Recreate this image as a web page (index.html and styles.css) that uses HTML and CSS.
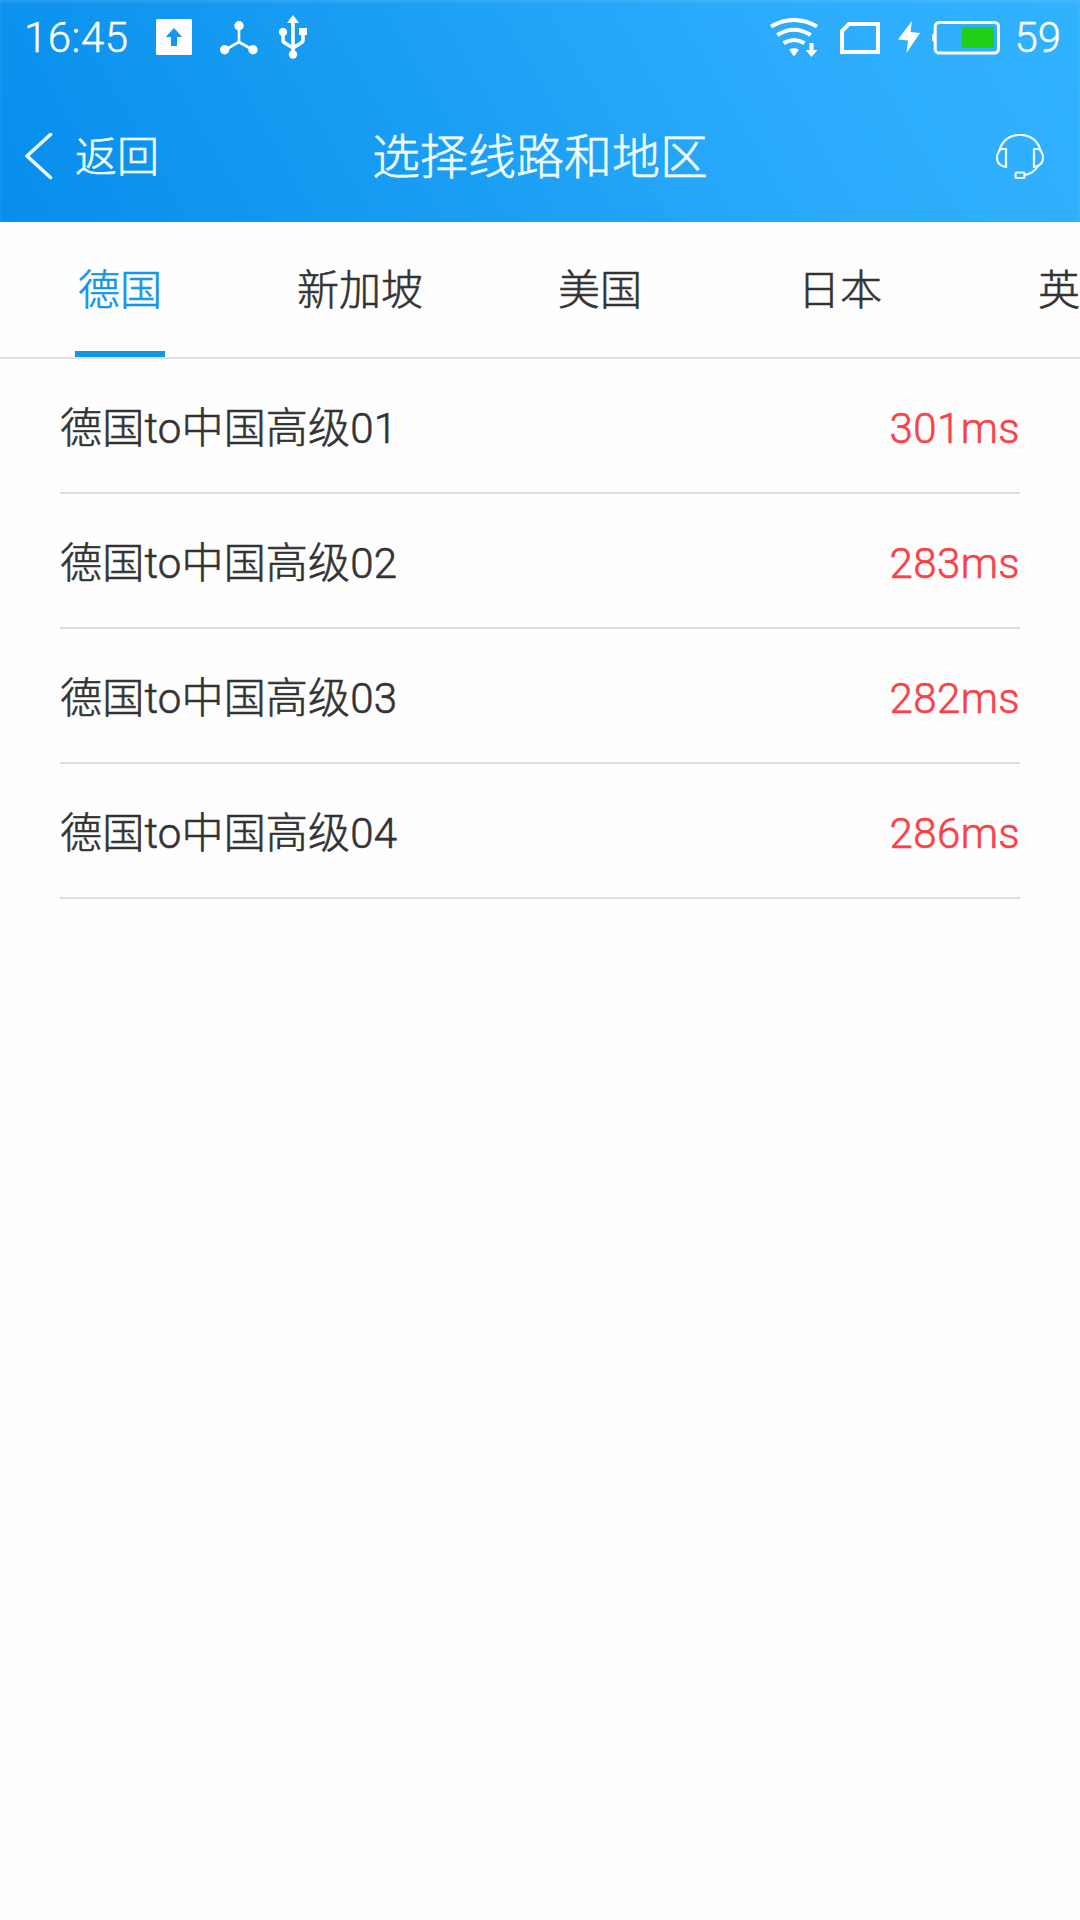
FILE: index.html
```html
<!DOCTYPE html>
<html lang="zh-CN">
<head>
<meta charset="utf-8">
<title>选择线路和地区</title>
<link rel="stylesheet" href="styles.css">
</head>
<body>
<header class="header">
  <div class="status">
    <span class="clock">16:45</span>
    <svg class="ic-upload" width="36" height="36" viewBox="0 0 36 36"><path fill="#fff" fill-rule="evenodd" d="M1.500 0H34.500Q36 0 36 1.500V34.500Q36 36 34.500 36H1.500Q0 36 0 34.500V1.500Q0 0 1.500 0ZM18 9L9.800 18H15V27H21V18H26.200Z"/></svg>
    <svg class="ic-hub" width="38" height="34" viewBox="0 0 38 34"><path d="M19 5V21L5 29M19 21L33 29" fill="none" stroke="#fff" stroke-width="2.600"/><g fill="#fff"><circle cx="19" cy="4.700" r="4.700"/><circle cx="4.700" cy="28.700" r="4.700"/><circle cx="33" cy="28.700" r="4.700"/></g></svg>
    <svg class="ic-usb" width="28" height="44" viewBox="0 0 28 44"><path d="M14 6V38M4 17V25Q4 27 6 28L14 33M24 17V25Q24 27 22 28L14 33" fill="none" stroke="#fff" stroke-width="3.600"/><g fill="#fff"><path d="M14 0L20 8H8ZM20 13H28V20H20Z"/><circle cx="4" cy="17" r="4"/><circle cx="14" cy="39.500" r="4.200"/></g></svg>
    <span class="spacer"></span>
    <svg class="ic-wifi" width="48" height="40" viewBox="0 0 48 40"><g fill="none" stroke="#fff" stroke-width="4"><path d="M1 8.500Q24 -4.500 47 8.500"/><path d="M7.300 17Q24 6.500 40.700 17"/><path d="M13.500 25.300Q24 18.700 34.500 25.300"/></g><g fill="#fff"><path d="M19 31.500Q24 29 29 31.500L24 38.500ZM39.500 25H43.500V32H47.500L41.500 39L35.500 32H39.500Z"/></g></svg>
    <svg class="ic-sim" width="40" height="32" viewBox="0 0 40 32"><path d="M2 30V9L9 2H38V30Z" fill="none" stroke="#fff" stroke-width="4"/></svg>
    <svg class="ic-bolt" width="22" height="32" viewBox="0 0 22 32"><path fill="#fff" d="M14 0L0 18.500L10 19.500L8.500 32L22 12L12.500 11Z"/></svg>
    <svg class="ic-battery" width="68" height="34" viewBox="0 0 68 34"><rect x="3.200" y="1.500" width="63.300" height="30.500" rx="4" fill="none" stroke="#fff" stroke-width="3"/><path d="M2 12V21Q0 20 0 18V15Q0 13 2 12Z" fill="#fff"/><rect x="30" y="6" width="32" height="21" fill="#20d016"/></svg>
    <span class="level">59</span>
  </div>
  <nav class="navbar">
    <a class="back"><svg width="28" height="48" viewBox="0 0 28 48"><path d="M25.500 1.500L2 23L25.500 44.500" fill="none" stroke="#eefcff" stroke-width="3.600" stroke-linecap="round"/></svg><span>返回</span></a>
    <h1 class="title">选择线路和地区</h1>
    <a class="support"><svg width="48" height="46" viewBox="0 0 48 46" fill="none" stroke="#edfcff" stroke-width="2.200"><path d="M3.500 16Q6 7.500 13 3.500Q24 -2 35 3.500Q42 7.500 44.500 16"/><path d="M10 15H5Q1 18.500 1 24Q1 31.500 10 33ZM38 15H43Q47 18.500 47 24Q47 31.500 38 33Z"/><path d="M42.500 31.500Q37 40 28.500 41"/><rect x="19.500" y="38.500" width="9" height="5.500" rx="1.500"/></svg></a>
  </nav>
</header>
<div class="tabs">
  <a class="tab active">德国</a>
  <a class="tab">新加坡</a>
  <a class="tab">美国</a>
  <a class="tab">日本</a>
  <a class="tab">英国</a>
</div>
<ul class="list">
  <li class="row"><span class="name">德国to中国高级01</span><span class="ping">301ms</span></li>
  <li class="row"><span class="name">德国to中国高级02</span><span class="ping">283ms</span></li>
  <li class="row"><span class="name">德国to中国高级03</span><span class="ping">282ms</span></li>
  <li class="row"><span class="name">德国to中国高级04</span><span class="ping">286ms</span></li>
</ul>
</body>
</html>
```
FILE: styles.css
```css
* { box-sizing: border-box; }
body {
  margin: 0;
  min-height: 1920px;
  background: #fefefe;
  color: #333;
  font: 300 42px/50px Roboto, "Noto Sans CJK SC", sans-serif;
  -webkit-text-stroke: 0.6px currentColor;
  overflow-x: hidden;
}
svg { display: block; flex: none; }
.header {
  height: 222px;
  color: #effcff;
  background: linear-gradient(60deg, #078eec 0%, #1b9ff4 42%, #2cabfc 72%, #31b2ff 100%);
  box-shadow: inset 0 2px 4px rgba(255, 255, 255, 0.12);
}
.status { display: flex; height: 74px; padding: 0 19px 0 24px; color: #fff; }
.clock, .level { padding-top: 13px; -webkit-text-stroke-width: 0.4px; }
.clock { width: 132px; letter-spacing: 0.5px; }
.spacer { flex: 1; }
.ic-upload { margin: 19px 28px 0 0; }
.ic-hub { margin: 21px 21px 0 0; }
.ic-usb { margin-top: 15px; }
.ic-wifi { margin: 18px 22px 0 0; }
.ic-sim { margin: 22px 18px 0 0; }
.ic-bolt { margin: 21px 12px 0 0; }
.ic-battery { margin: 21px 14px 0 0; }
.navbar {
  display: grid;
  grid-template-columns: 311px 1fr 300px;
  align-items: center;
  height: 148px;
  padding: 18px 36px 0 25px;
}
.back { display: flex; align-items: center; gap: 22px; }
.back span { padding-top: 2px; }
.title { margin: 0; padding-top: 2px; font-size: 48px; line-height: 60px; font-weight: 300; text-align: center; white-space: nowrap; }
.support { justify-self: end; }
.tabs {
  display: flex;
  height: 137px;
  border-bottom: 2px solid #dedede;
  overflow: hidden;
}
.tab {
  flex: none;
  width: 240px;
  padding-top: 44px;
  text-align: center;
}
.active { color: #1296e8; }
.active::after { content: ""; display: block; width: 90px; height: 6px; margin: 35px auto 0; background: #1296e1; }
.list { margin: 0; padding: 0 60px; list-style: none; }
.row {
  display: flex;
  justify-content: space-between;
  align-items: center;
  height: 135px;
  padding-top: 6px;
  border-bottom: 2px solid #dedede;
}
.name { letter-spacing: 0.2px; }
.ping { color: #fb4146; letter-spacing: 0.4px; }
```
